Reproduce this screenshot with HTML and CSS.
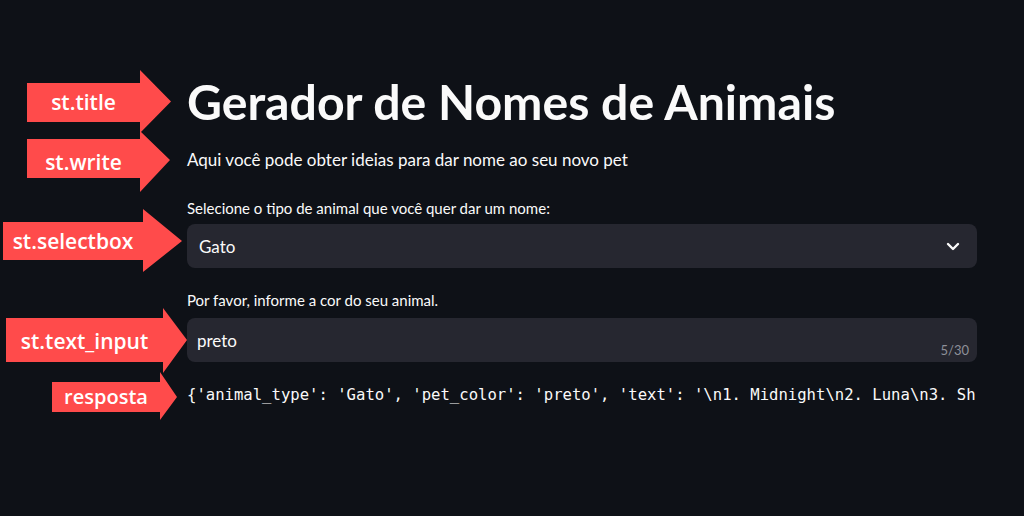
FILE: index.html
```html
<!DOCTYPE html>
<html lang="pt">
<head>
<meta charset="utf-8">
<title>Gerador de Nomes de Animais</title>
<link rel="stylesheet" href="styles.css">
</head>
<body>
<main class="main">
  <h1 class="title">Gerador de Nomes de Animais</h1>
  <p class="write">Aqui você pode obter ideias para dar nome ao seu novo pet</p>
  <label class="label label-select">Selecione o tipo de animal que você quer dar um nome:</label>
  <div class="select">
    <span class="select-value">Gato</span>
    <svg class="chevron" width="14" height="9" viewBox="0 0 14 9"><path d="M2 2 L7 7 L12 2" fill="none" stroke="#fafafa" stroke-width="2.4" stroke-linecap="round" stroke-linejoin="round"/></svg>
  </div>
  <label class="label label-input">Por favor, informe a cor do seu animal.</label>
  <div class="input">
    <span class="input-value">preto</span>
    <span class="counter">5/30</span>
  </div>
  <div class="response">{'animal_type': 'Gato', 'pet_color': 'preto', 'text': '\n1. Midnight\n2. Luna\n3. Sh</div>
</main>

<div class="arrow arrow-title">st.title</div>
<div class="arrow arrow-write">st.write</div>
<div class="arrow arrow-select">st.selectbox</div>
<div class="arrow arrow-input">st.text_input</div>
<div class="arrow arrow-resp">resposta</div>
</body>
</html>
```
FILE: styles.css
```css
html, body {
  margin: 0;
  padding: 0;
}
body {
  background: #0e1117;
  color: #fafafa;
  font-family: "Lato", "Open Sans", sans-serif;
  width: 1024px;
  height: 516px;
  overflow: hidden;
  position: relative;
}
.main {
  display: flex;
  flex-direction: column;
  width: 790px;
  padding: 75px 0 0 187px;
}
.title {
  margin: 0;
  font-size: 48.2px;
  font-weight: 700;
  line-height: 52px;
  letter-spacing: 0;
}
.write {
  margin: 21px 0 0;
  font-size: 17px;
  line-height: 24px;
}
.label {
  display: block;
  font-size: 15px;
  line-height: 20px;
}
.label-select { margin-top: 26px; }
.label-input { margin-top: 22px; }
.select, .input {
  height: 44px;
  background: #262730;
  border-radius: 8px;
  display: flex;
  align-items: center;
  position: relative;
  box-sizing: border-box;
}
.select {
  margin-top: 6px;
  padding: 0 16px 0 12px;
  justify-content: space-between;
}
.select-value, .input-value {
  font-size: 17px;
}
.chevron { margin-right: 1px; }
.input {
  margin-top: 8px;
  padding: 0 10px;
}
.counter {
  position: absolute;
  right: 8px;
  bottom: 4px;
  font-size: 13px;
  color: #8e9099;
}
.response {
  margin-top: 21px;
  font-family: "DejaVu Sans Mono", "Liberation Mono", monospace;
  font-size: 15.6px;
  line-height: 24px;
  white-space: pre;
}

.arrow {
  position: absolute;
  background: #ff4b4b;
  color: #ffffff;
  font-family: "Open Sans", sans-serif;
  font-weight: 600;
  font-size: 21px;
  display: flex;
  align-items: center;
  justify-content: center;
  box-sizing: border-box;
}
.arrow-title {
  left: 27px; top: 70px; width: 144px; height: 63px;
  padding-right: 31px;
  clip-path: polygon(0 13px, 113px 13px, 113px 0, 144px 31.5px, 113px 63px, 113px 52px, 0 52px);
}
.arrow-write {
  left: 27px; top: 131px; width: 143px; height: 61px;
  padding-right: 30px;
  clip-path: polygon(0 8px, 113px 8px, 113px 0, 143px 29px, 113px 61px, 113px 47px, 0 47px);
}
.arrow-select {
  left: 3px; top: 209px; width: 179px; height: 63px;
  padding-right: 39px;
  clip-path: polygon(0 13px, 140px 13px, 140px 0, 179px 32px, 140px 63px, 140px 51px, 0 51px);
}
.arrow-input {
  left: 6px; top: 308px; width: 181px; height: 65px;
  padding-right: 24px;
  clip-path: polygon(0 10px, 157px 10px, 157px 0, 181px 32px, 157px 65px, 157px 54px, 0 54px);
}
.arrow-resp {
  left: 52px; top: 372px; width: 125px; height: 48px;
  padding-right: 17px;
  font-size: 20px;
  clip-path: polygon(0 10px, 108px 10px, 108px 0, 125px 25px, 108px 48px, 108px 40px, 0 40px);
}
```
